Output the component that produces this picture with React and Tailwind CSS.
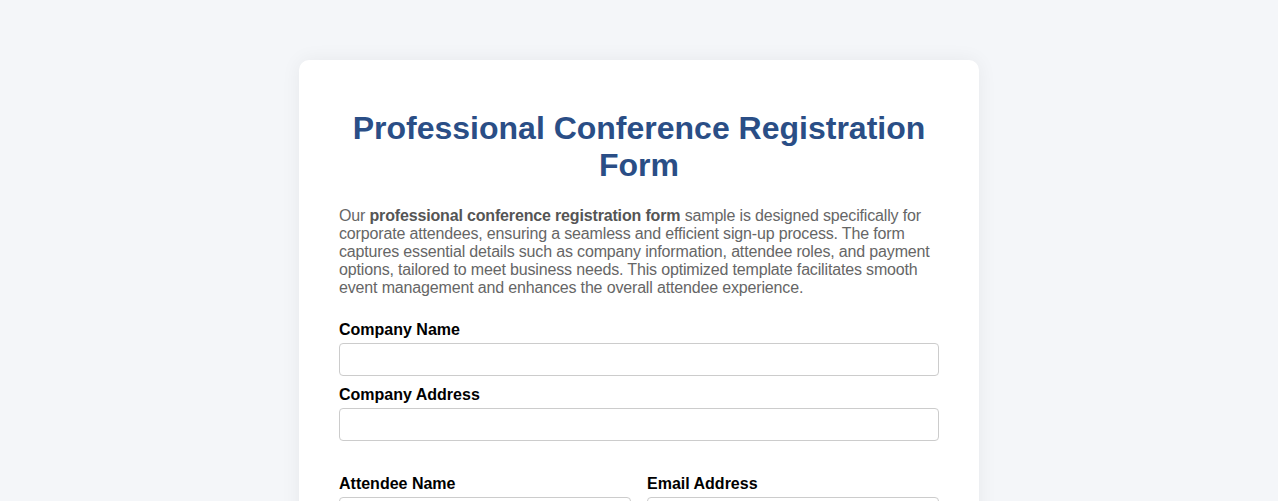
import React from "react";

const Field = ({ label, className = "" }) => (
  <div className={`flex flex-col ${className}`}>
    <label className="mt-px mb-[4px] font-bold text-[16px] leading-[18px] text-black">{label}</label>
    <input className="h-[33px] w-full rounded-[4px] border border-[#cccccc] bg-white px-2" />
  </div>
);

export default function App() {
  return (
    <div className="min-h-screen bg-[#f4f6f9] pt-[60px] font-['Liberation_Sans',Arial,sans-serif]">
      <div className="mx-auto w-[680px] rounded-[10px] bg-white px-[40px] pt-[50px] pb-10 shadow-[0_0_20px_rgba(0,0,0,0.06)]">
        <h1 className="text-center text-[32px] font-bold leading-[37px] text-[#2a4e86]">
          Professional Conference Registration Form
        </h1>
        <p className="mt-[23px] text-[16px] leading-[18px] tracking-[-0.16px] text-[#666666]">
          Our <strong className="font-bold text-[#555555]">professional conference registration form</strong> sample is
          designed specifically for corporate attendees, ensuring a seamless and efficient sign-up process. The form
          captures essential details such as company information, attendee roles, and payment options, tailored to meet
          business needs. This optimized template facilitates smooth event management and enhances the overall attendee
          experience.
        </p>
        <div className="mt-[23px] flex flex-col gap-[9px]">
          <Field label="Company Name" />
          <Field label="Company Address" />
        </div>
        <div className="mt-[33px] grid grid-cols-2 gap-4">
          <Field label="Attendee Name" />
          <Field label="Email Address" />
        </div>
        <div className="mt-[9px] grid grid-cols-2 gap-4">
          <Field label="Job Title" />
          <Field label="Phone Number" />
        </div>
      </div>
    </div>
  );
}
